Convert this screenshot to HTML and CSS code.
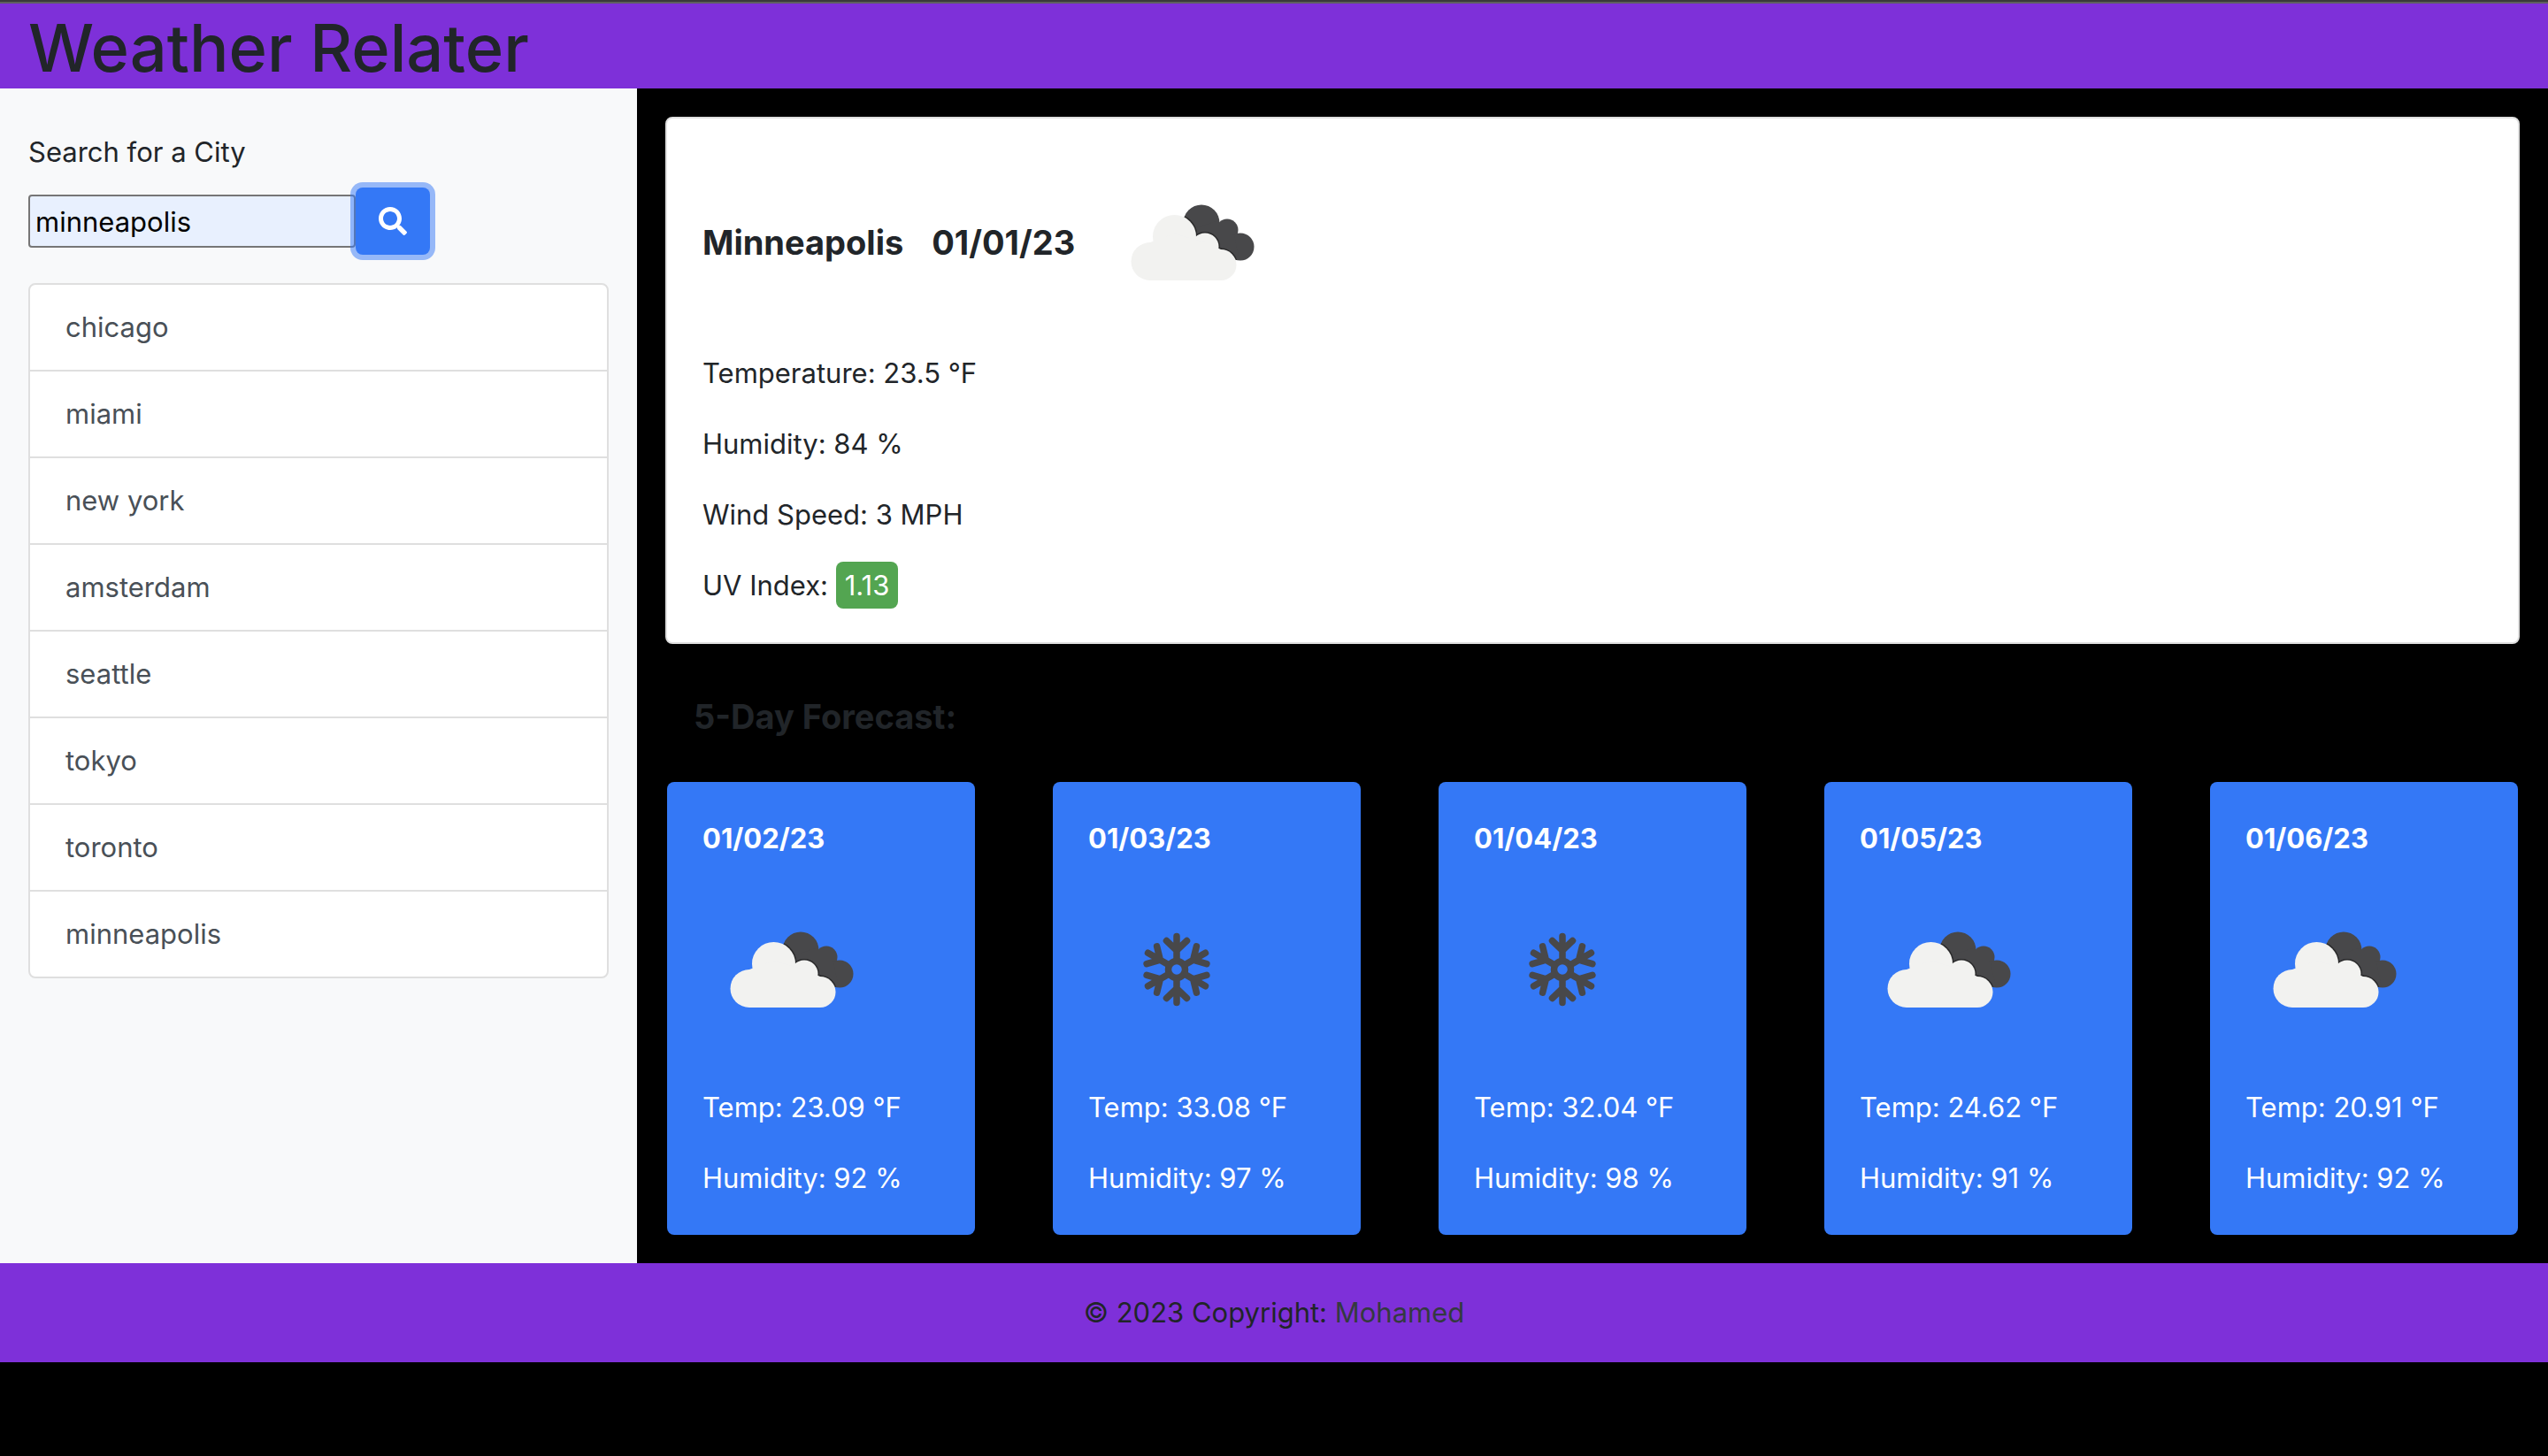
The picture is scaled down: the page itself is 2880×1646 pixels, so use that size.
FILE: index.html
```html
<!DOCTYPE html>
<html lang="en">
<head>
<meta charset="utf-8">
<meta name="viewport" content="width=device-width, initial-scale=1">
<title>Weather Relater</title>
<link rel="stylesheet" href="styles.css">
</head>
<body>
<svg class="sprite" aria-hidden="true">
  <defs>
    <g id="dark-puffs">
      <circle cx="111" cy="78" r="20.500"/>
      <circle cx="140" cy="86" r="12.500"/>
      <circle cx="155" cy="105" r="15.500"/>
      <path d="M100 85 L128 76 L148 92 L154 120 L120 110Z"/>
    </g>
    <g id="light-puffs">
      <circle cx="53" cy="121.500" r="21.500"/>
      <circle cx="80.500" cy="93.500" r="24.500"/>
      <circle cx="115" cy="105" r="15.500"/>
      <circle cx="133" cy="125.500" r="17.500"/>
      <path d="M53 100 L80 90 L115 100 L133 108 V143 H53Z"/>
    </g>
    <clipPath id="dark-clip">
      <circle cx="111" cy="78" r="20.500"/>
      <circle cx="140" cy="86" r="12.500"/>
      <circle cx="155" cy="105" r="15.500"/>
      <path d="M100 85 L128 76 L148 92 L154 120 L120 110Z"/>
    </clipPath>
    <symbol id="clouds" viewBox="0 0 200 200">
      <use href="#dark-puffs" fill="#48484a"/>
      <g clip-path="url(#dark-clip)">
        <use href="#light-puffs" fill="#2a2a2b" stroke="#2a2a2b" stroke-width="3"/>
      </g>
      <use href="#light-puffs" fill="#f2f2f0"/>
    </symbol>
    <g id="snow-arm">
      <path d="M100 88 V62.500 M88.500 67.500 L100 78.500 L111.500 67.500"/>
    </g>
    <symbol id="snow" viewBox="0 0 200 200">
      <g fill="none" stroke="#48484a" stroke-width="7.500" stroke-linecap="round" stroke-linejoin="round">
        <circle cx="100" cy="100" r="9.500"/>
        <use href="#snow-arm"/>
        <use href="#snow-arm" transform="rotate(60 100 100)"/>
        <use href="#snow-arm" transform="rotate(120 100 100)"/>
        <use href="#snow-arm" transform="rotate(180 100 100)"/>
        <use href="#snow-arm" transform="rotate(240 100 100)"/>
        <use href="#snow-arm" transform="rotate(300 100 100)"/>
      </g>
    </symbol>
  </defs>
</svg>

<header class="site-header">
  <h1>Weather Relater</h1>
</header>

<div class="layout">
  <aside class="sidebar">
    <form class="search">
      <label for="city">Search for a City</label>
      <div class="search-row">
        <input id="city" type="text" value="minneapolis">
        <button type="button" aria-label="Search">
          <svg viewBox="0 0 512 512" aria-hidden="true"><path fill="currentColor" d="M505 442.700L405.300 343c-4.500-4.500-10.600-7-17-7H372c27.600-35.300 44-79.700 44-128C416 93.100 322.900 0 208 0S0 93.100 0 208s93.100 208 208 208c48.300 0 92.700-16.400 128-44v16.300c0 6.400 2.500 12.500 7 17l99.700 99.700c9.400 9.400 24.600 9.400 33.900 0l28.300-28.300c9.400-9.400 9.400-24.600.1-34zM208 336c-70.700 0-128-57.200-128-128 0-70.700 57.200-128 128-128 70.700 0 128 57.200 128 128 0 70.700-57.200 128-128 128z"/></svg>
        </button>
      </div>
    </form>
    <ul class="history">
      <li>chicago</li>
      <li>miami</li>
      <li>new york</li>
      <li>amsterdam</li>
      <li>seattle</li>
      <li>tokyo</li>
      <li>toronto</li>
      <li>minneapolis</li>
    </ul>
  </aside>

  <main class="content">
    <section class="current">
      <h2 class="current-title"><span>Minneapolis</span><span>01/01/23</span><svg class="weather-icon" role="img" aria-label="Broken clouds"><use href="#clouds"/></svg></h2>
      <p>Temperature: 23.5 °F</p>
      <p>Humidity: 84 %</p>
      <p>Wind Speed: 3 MPH</p>
      <p>UV Index: <span class="uv">1.13</span></p>
    </section>

    <h2 class="forecast-title">5-Day Forecast:</h2>
    <section class="forecast">
      <article class="day">
        <h3>01/02/23</h3>
        <svg class="weather-icon" role="img" aria-label="Broken clouds"><use href="#clouds"/></svg>
        <p>Temp: 23.09 °F</p>
        <p>Humidity: 92 %</p>
      </article>
      <article class="day">
        <h3>01/03/23</h3>
        <svg class="weather-icon" role="img" aria-label="Snow"><use href="#snow"/></svg>
        <p>Temp: 33.08 °F</p>
        <p>Humidity: 97 %</p>
      </article>
      <article class="day">
        <h3>01/04/23</h3>
        <svg class="weather-icon" role="img" aria-label="Snow"><use href="#snow"/></svg>
        <p>Temp: 32.04 °F</p>
        <p>Humidity: 98 %</p>
      </article>
      <article class="day">
        <h3>01/05/23</h3>
        <svg class="weather-icon" role="img" aria-label="Broken clouds"><use href="#clouds"/></svg>
        <p>Temp: 24.62 °F</p>
        <p>Humidity: 91 %</p>
      </article>
      <article class="day">
        <h3>01/06/23</h3>
        <svg class="weather-icon" role="img" aria-label="Broken clouds"><use href="#clouds"/></svg>
        <p>Temp: 20.91 °F</p>
        <p>Humidity: 92 %</p>
      </article>
    </section>
  </main>
</div>

<footer class="site-footer">© 2023 Copyright: <a href="#">Mohamed</a></footer>
</body>
</html>
```
FILE: styles.css
```css
* {
  box-sizing: border-box;
}

body {
  margin: 0;
  border-top: 2px solid #3a3a3a;
  background: #000;
  color: #212529;
  font-family: Inter, "Liberation Sans", sans-serif;
  font-size: 31px;
  line-height: 48px;
}

h1,
h2,
h3,
p,
ul {
  margin: 0;
}

.sprite {
  position: absolute;
  width: 0;
  height: 0;
}

.site-header {
  padding: 4px 32px 0;
  border-top: 2px solid #5f5f5f;
  background: #7e30d9;
}

.site-header h1 {
  font-size: 74px;
  font-weight: 500;
  line-height: 92px;
}

.layout {
  display: grid;
  grid-template-columns: 1fr 3fr;
}

.sidebar {
  padding: 48px 32px 32px;
  background: #f8f9fa;
}

.search label {
  display: block;
  margin-bottom: 16px;
}

.search-row {
  display: flex;
  align-items: center;
  margin-bottom: 32px;
}

.search input {
  width: 370px;
  height: 60px;
  padding: 2px 6px;
  border: 2px solid #767676;
  border-radius: 4px;
  background: #e8f0fe;
  color: #000;
  font: inherit;
}

.search button {
  display: flex;
  padding: 22px 26px;
  border: 0;
  border-radius: 8px;
  background: #3478f6;
  box-shadow: 0 0 0 6px rgba(52, 120, 246, 0.5);
  color: #fff;
}

.search button svg {
  width: 32px;
  height: 32px;
}

.history {
  padding: 0;
  border: 2px solid #dfdfdf;
  border-radius: 8px;
  background: #fff;
  color: #495057;
  list-style: none;
}

.history li {
  padding: 24px 40px;
}

.history li + li {
  border-top: 2px solid #dfdfdf;
}

.content {
  padding: 32px;
}

.current {
  padding: 40px;
  border: 2px solid #dfdfdf;
  border-radius: 8px;
  background: #fff;
}

.current-title {
  display: flex;
  align-items: center;
  gap: 32px;
  margin-bottom: 24px;
  font-size: 38px;
  font-weight: 700;
}

.current p + p {
  margin-top: 32px;
}

.uv {
  padding: 8px 10px;
  border-radius: 8px;
  background: #53a551;
  color: #fff;
}

.weather-icon {
  display: block;
  width: 200px;
  height: 200px;
}

.forecast-title {
  padding: 58px 32px 50px;
  font-size: 38px;
  font-weight: 700;
}

.forecast {
  display: grid;
  grid-template-columns: repeat(5, 1fr);
  gap: 88px;
  padding: 0 2px;
}

.day {
  display: grid;
  padding: 40px;
  border-radius: 8px;
  background: #3478f6;
  color: #fff;
}

.day h3 {
  margin-bottom: 24px;
  font-size: 31px;
  font-weight: 700;
}

.day p {
  margin-top: 32px;
}

.site-footer {
  padding: 32px;
  background: #7e30d9;
  text-align: center;
}

.site-footer a {
  color: #343a40;
  text-decoration: none;
}
```
